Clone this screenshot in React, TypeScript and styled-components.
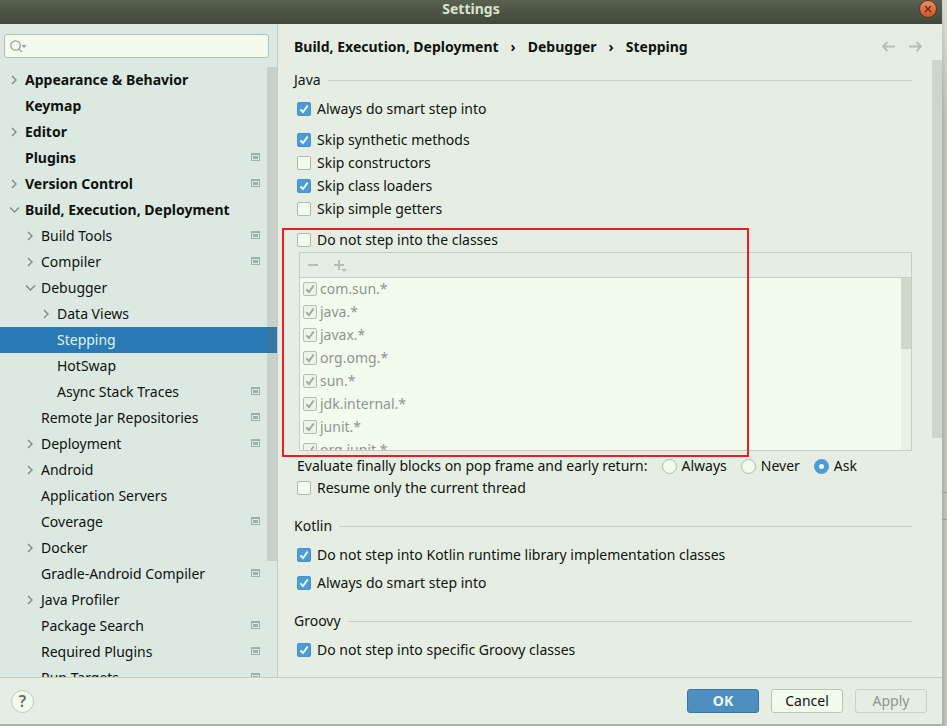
import React, { useState } from 'react';
import styled, { createGlobalStyle, css } from 'styled-components';

const color = {
  panel: '#e6eee3',
  side: '#dce8e2',
  field: '#f3fbef',
  line: '#c5cec3',
  text: '#0e140e',
  muted: '#8e968c',
  icon: '#9bb0ab',
  accent: '#4c9dd6',
  selected: '#2a7ab5',
};

const GlobalStyle = createGlobalStyle`
  *, *::before, *::after { box-sizing: border-box; }
  body { margin: 0; }
  button, input { font: inherit; color: inherit; }
`;

const Desktop = styled.div`
  height: 100vh;
  padding: 0 5px 2px 0;
  background:
    linear-gradient(#9aa397, #9aa397) right 492px / 5px 1px no-repeat,
    linear-gradient(#9aa397, #9aa397) right 519px / 5px 1px no-repeat,
    linear-gradient(rgba(230, 238, 227, 0.6), transparent 120px) right top / 5px 100% no-repeat,
    linear-gradient(90deg, #a7b1a4, #c3cdbf) right top / 5px 100% no-repeat,
    #a9b3a6;
  font: 14px/18px 'Noto Sans', sans-serif;
  color: ${color.text};
`;

const Window = styled.div`
  display: flex;
  flex-direction: column;
  height: 100%;
  background: ${color.panel};
`;

const TitleBar = styled.header`
  display: grid;
  grid-template-columns: 1fr auto 1fr;
  align-items: center;
  flex: none;
  height: 24px;
  padding: 0 5px 6px;
  background: linear-gradient(#596150, #41473a);
  color: #dbe0cf;
`;

const Title = styled.h1`
  grid-column: 2;
  margin: 0;
  font-size: 14px;
  line-height: 18px;
  font-weight: 700;
`;

const CloseButton = styled.button`
  display: grid;
  place-items: center;
  justify-self: end;
  width: 18px;
  height: 18px;
  padding: 0;
  border: 1px solid #4a3a2c;
  border-radius: 50%;
  background: linear-gradient(#ee8a62, #dc5420);
  color: #45301c;
`;

const Body = styled.div`
  display: flex;
  flex: 1;
  min-height: 0;
`;

const Sidebar = styled.aside`
  display: flex;
  flex-direction: column;
  flex: none;
  width: 278px;
  border-right: 1px solid ${color.line};
  background: ${color.side};
`;

const SearchBox = styled.label`
  display: flex;
  align-items: center;
  gap: 4px;
  height: 24px;
  margin: 10px 8px 9px 4px;
  padding: 0 5px;
  border: 1px solid #b5c1b3;
  border-radius: 3px;
  background: ${color.field};
  color: #8fa09a;
`;

const SearchInput = styled.input`
  flex: 1;
  min-width: 0;
  padding: 0;
  border: 0;
  outline: 0;
  background: transparent;
`;

const TreeArea = styled.nav`
  position: relative;
  flex: 1;
  min-height: 0;
  overflow: hidden;
`;

const TreeList = styled.ul`
  margin: 0;
  padding: 0;
  list-style: none;
`;

const TreeRow = styled.button<{ $level: number; $selected?: boolean }>`
  display: grid;
  grid-template-columns: 12px 1fr 11px;
  align-items: center;
  column-gap: 5px;
  width: 100%;
  height: 26px;
  padding: 0 15px 0 ${(p) => 8 + p.$level * 16}px;
  border: 0;
  background: ${(p) => (p.$selected ? color.selected : 'transparent')};
  color: ${(p) => (p.$selected ? '#e3f2ee' : color.text)};
  font-weight: ${(p) => (p.$level === 0 ? 700 : 400)};
  text-align: left;
  white-space: nowrap;
`;

const TreeLabel = styled.span`
  grid-column: 2;
`;

const Thumb = styled.div<{ $top: number; $length: number }>`
  position: absolute;
  top: ${(p) => p.$top}px;
  right: 0;
  width: 10px;
  height: ${(p) => p.$length}px;
  background: rgba(100, 110, 95, 0.19);
`;

const Main = styled.main`
  position: relative;
  flex: 1;
  min-width: 0;
  overflow: hidden;
  padding: 14px 30px 0 16px;
`;

const TopRow = styled.div`
  display: flex;
  align-items: center;
  justify-content: space-between;
  height: 18px;
  margin-right: -11px;
`;

const Crumbs = styled.nav`
  display: flex;
  align-items: center;
  gap: 12px;
  font-weight: 700;
`;

const NavButtons = styled.div`
  display: flex;
  gap: 12px;
`;

const IconButton = styled.button`
  display: grid;
  place-items: center;
  padding: 0;
  border: 0;
  background: none;
  color: #b5beb3;
`;

const SectionTitle = styled.h2<{ $gap: number }>`
  display: flex;
  align-items: center;
  gap: 7px;
  margin: ${(p) => p.$gap}px 0 0;
  font-size: 14px;
  line-height: 18px;
  font-weight: 400;

  &::after {
    content: '';
    flex: 1;
    height: 1px;
    background: ${color.line};
  }
`;

const Options = styled.div<{ $top: number; $gap?: number }>`
  display: flex;
  flex-direction: column;
  align-items: flex-start;
  gap: ${(p) => p.$gap ?? 5}px;
  margin: ${(p) => p.$top}px 0 0 3px;
`;

const CheckLabel = styled.label<{ $tight?: boolean; $disabled?: boolean }>`
  display: flex;
  align-items: center;
  gap: ${(p) => (p.$tight ? 3 : 6)}px;
  color: ${(p) => (p.$disabled ? color.muted : color.text)};
`;

const Stack = styled.span`
  display: grid;
  place-items: center;
  & > * { grid-area: 1 / 1; }
  & > svg { pointer-events: none; }
`;

const control = css`
  appearance: none;
  margin: 0;
  border: 1px solid #b0b8ad;
  background: ${color.field};
`;

const CheckInput = styled.input`
  ${control}
  width: 14px;
  height: 14px;
  border-radius: 2px;

  &:checked { background: ${color.accent}; border-color: #4593ca; }
  &:disabled { background: #ecf4e8; border-color: #b5beb3; }
`;

const RadioInput = styled.input`
  ${control}
  width: 15px;
  height: 15px;
  border-radius: 50%;

  &:checked { border: 5px solid ${color.accent}; }
`;

const RadioLabel = styled.label`
  display: flex;
  align-items: center;
  gap: 5px;
`;

const RadioRow = styled.div`
  display: flex;
  align-items: center;
  gap: 14px;
`;

const ClassFilter = styled.section`
  position: relative;
  margin: 13px 0 6px 3px;
`;

const Highlight = styled.div`
  position: absolute;
  top: -3px;
  left: -15px;
  width: 467px;
  height: 229px;
  border: 2px solid #ee1c25;
  pointer-events: none;
`;

const FilterPanel = styled.div`
  margin: 3px 0 0 2px;
  border: 1px solid ${color.line};
`;

const Toolbar = styled.div`
  display: flex;
  align-items: center;
  gap: 15px;
  height: 25px;
  padding-left: 7px;
  border-bottom: 1px solid ${color.line};
`;

const FilterList = styled.div`
  position: relative;
  height: 172px;
  overflow: hidden;
  background: linear-gradient(to left, #e8f1e5 10px, ${color.field} 10px);
`;

const FilterRow = styled.div`
  display: flex;
  align-items: flex-start;
  height: 23px;
  padding: 2px 0 0 3px;
`;

const Footer = styled.footer`
  display: flex;
  align-items: center;
  gap: 12px;
  flex: none;
  height: 47px;
  padding: 0 15px 0 11px;
  border-top: 1px solid ${color.line};
`;

const HelpButton = styled.button`
  width: 23px;
  height: 23px;
  margin-right: auto;
  padding: 0;
  border: 1px solid #c0c9be;
  border-radius: 50%;
  background: ${color.field};
  color: #666e64;
  font-size: 16px;
  line-height: 20px;
  font-weight: 600;
`;

const FooterButton = styled.button<{ $kind?: 'primary' }>`
  width: 72px;
  height: 24px;
  padding: 0;
  border: 1px solid #b9c2b7;
  border-radius: 3px;
  background: ${color.field};
  line-height: 20px;

  &:disabled { background: transparent; border-color: #c8d1c6; color: ${color.muted}; }

  ${(p) => p.$kind === 'primary' && css`
    border-color: #3a77aa;
    background: #4f8fc0;
    color: #eaf6f2;
    font-weight: 700;
  `}
`;

const Chevron = ({ open }: { open: boolean }) => (
  <svg width="12" height="12" viewBox="0 0 12 12" fill="none" stroke="#7f8c84" strokeWidth="1.4">
    <path d={open ? 'M2 3.500 6.500 8 11 3.500' : 'M4 2 8 6 4 10'} />
  </svg>
);

const ProjectMark = () => (
  <svg width="9" height="10" viewBox="0 0 9 10" fill={color.icon}>
    <path fillRule="evenodd" d="M0 0h9v8H0zM1 2v5h7V2z" />
    <path d="M2 3h5v3H2z" />
  </svg>
);

const Arrow = ({ back }: { back?: boolean }) => (
  <svg width="15" height="12" viewBox="0 0 15 12" fill="none" stroke="currentColor" strokeWidth="1.8">
    <path d={back ? 'M14 5.500H2M6.500 1 2 5.500l4.500 4.500' : 'M1 5.500h12M8.500 1 13 5.500l-4.500 4.500'} />
  </svg>
);

type CheckProps = { label: string; on?: boolean; disabled?: boolean };

const Check = ({ label, on = false, disabled }: CheckProps) => {
  const [checked, setChecked] = useState(on);
  return (
    <CheckLabel $tight={disabled} $disabled={disabled}>
      <Stack>
        <CheckInput
          type="checkbox"
          checked={checked}
          disabled={disabled}
          onChange={(e) => setChecked(e.target.checked)}
        />
        {checked && (
          <svg width="14" height="14" viewBox="0 0 14 14" fill="none" stroke={disabled ? '#9fa79d' : '#f3fbef'} strokeWidth="1.900">
            <path d="M3.300 7.300 6 10l4.700-6.500" />
          </svg>
        )}
      </Stack>
      {label}
    </CheckLabel>
  );
};

type Node = { name: string; level: number; open?: boolean; mark?: boolean };

const nodes: Node[] = [
  { name: 'Appearance & Behavior', level: 0, open: false },
  { name: 'Keymap', level: 0 },
  { name: 'Editor', level: 0, open: false },
  { name: 'Plugins', level: 0, mark: true },
  { name: 'Version Control', level: 0, open: false, mark: true },
  { name: 'Build, Execution, Deployment', level: 0, open: true },
  { name: 'Build Tools', level: 1, open: false, mark: true },
  { name: 'Compiler', level: 1, open: false, mark: true },
  { name: 'Debugger', level: 1, open: true },
  { name: 'Data Views', level: 2, open: false },
  { name: 'Stepping', level: 2 },
  { name: 'HotSwap', level: 2 },
  { name: 'Async Stack Traces', level: 2, mark: true },
  { name: 'Remote Jar Repositories', level: 1, mark: true },
  { name: 'Deployment', level: 1, open: false, mark: true },
  { name: 'Android', level: 1, open: false },
  { name: 'Application Servers', level: 1 },
  { name: 'Coverage', level: 1, mark: true },
  { name: 'Docker', level: 1, open: false },
  { name: 'Gradle-Android Compiler', level: 1, mark: true },
  { name: 'Java Profiler', level: 1, open: false },
  { name: 'Package Search', level: 1, mark: true },
  { name: 'Required Plugins', level: 1, mark: true },
  { name: 'Run Targets', level: 1, mark: true },
];

const filters = ['com.sun.*', 'java.*', 'javax.*', 'org.omg.*', 'sun.*', 'jdk.internal.*', 'junit.*', 'org.junit.*'];

export default function App() {
  const [selected, setSelected] = useState('Stepping');
  const [answer, setAnswer] = useState('Ask');

  return (
    <Desktop>
      <GlobalStyle />
      <Window>
        <TitleBar>
          <Title>Settings</Title>
          <CloseButton aria-label="Close">
            <svg width="8" height="8" viewBox="0 0 8 8" stroke="currentColor" strokeWidth="1.300">
              <path d="M1 1l6 6M7 1 1 7" />
            </svg>
          </CloseButton>
        </TitleBar>
        <Body>
          <Sidebar>
            <SearchBox>
              <svg width="17" height="13" viewBox="0 0 17 13" fill="none" stroke="currentColor" strokeWidth="1.200">
                <circle cx="5.500" cy="5.500" r="4.700" />
                <path d="M8.800 8.800 12 12" />
                <path d="M11.500 5h5L14 8z" fill="currentColor" stroke="none" />
              </svg>
              <SearchInput type="text" aria-label="Search settings" />
            </SearchBox>
            <TreeArea aria-label="Settings categories">
              <TreeList>
                {nodes.map((n) => (
                  <li key={n.name}>
                    <TreeRow $level={n.level} $selected={n.name === selected} onClick={() => setSelected(n.name)}>
                      {n.open !== undefined && <Chevron open={n.open} />}
                      <TreeLabel>{n.name}</TreeLabel>
                      {n.mark && <ProjectMark />}
                    </TreeRow>
                  </li>
                ))}
              </TreeList>
              <Thumb $top={0} $length={494} />
            </TreeArea>
          </Sidebar>
          <Main>
            <TopRow>
              <Crumbs aria-label="Breadcrumb">
                <span>Build, Execution, Deployment</span>
                <span>›</span>
                <span>Debugger</span>
                <span>›</span>
                <span>Stepping</span>
              </Crumbs>
              <NavButtons>
                <IconButton aria-label="Back"><Arrow back /></IconButton>
                <IconButton aria-label="Forward"><Arrow /></IconButton>
              </NavButtons>
            </TopRow>

            <SectionTitle $gap={15}>Java</SectionTitle>
            <Options $top={11}>
              <Check label="Always do smart step into" on />
            </Options>
            <Options $top={13}>
              <Check label="Skip synthetic methods" on />
              <Check label="Skip constructors" />
              <Check label="Skip class loaders" on />
              <Check label="Skip simple getters" />
            </Options>

            <ClassFilter>
              <Check label="Do not step into the classes" />
              <FilterPanel>
                <Toolbar>
                  <IconButton aria-label="Remove" disabled>
                    <svg width="12" height="14" viewBox="0 0 12 14"><path d="M1 6h10v2H1z" fill="currentColor" /></svg>
                  </IconButton>
                  <IconButton aria-label="Add" disabled>
                    <svg width="14" height="14" viewBox="0 0 14 14" fill="currentColor">
                      <path d="M0 6h4V2h2v4h4v2H6v4H4V8H0zM7 11h6l-3 3z" />
                    </svg>
                  </IconButton>
                </Toolbar>
                <FilterList>
                  {filters.map((f) => (
                    <FilterRow key={f}><Check label={f} on disabled /></FilterRow>
                  ))}
                  <Thumb $top={0} $length={71} />
                </FilterList>
              </FilterPanel>
              <Highlight />
            </ClassFilter>

            <Options $top={0} $gap={4}>
              <RadioRow role="radiogroup" aria-label="Evaluate finally blocks">
                <span>Evaluate finally blocks on pop frame and early return:</span>
                {['Always', 'Never', 'Ask'].map((a) => (
                  <RadioLabel key={a}>
                    <RadioInput type="radio" name="finally" checked={answer === a} onChange={() => setAnswer(a)} />
                    {a}
                  </RadioLabel>
                ))}
              </RadioRow>
              <Check label="Resume only the current thread" />
            </Options>

            <SectionTitle $gap={20}>Kotlin</SectionTitle>
            <Options $top={11}>
              <Check label="Do not step into Kotlin runtime library implementation classes" on />
            </Options>
            <Options $top={10}>
              <Check label="Always do smart step into" on />
            </Options>

            <SectionTitle $gap={20}>Groovy</SectionTitle>
            <Options $top={11}>
              <Check label="Do not step into specific Groovy classes" on />
            </Options>
            <Thumb $top={36} $length={378} />
          </Main>
        </Body>
        <Footer>
          <HelpButton aria-label="Help">?</HelpButton>
          <FooterButton $kind="primary">OK</FooterButton>
          <FooterButton>Cancel</FooterButton>
          <FooterButton disabled>Apply</FooterButton>
        </Footer>
      </Window>
    </Desktop>
  );
}
